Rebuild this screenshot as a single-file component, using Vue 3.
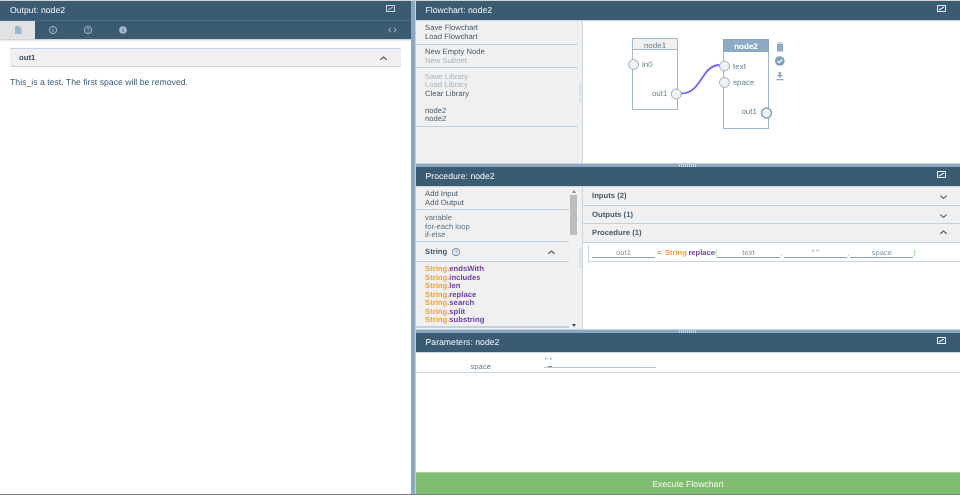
<script setup>
const fnNames = ['endsWith', 'includes', 'len', 'replace', 'search', 'split', 'substring']
</script>

<template>
  <div class="app">
    <section class="left">
      <header class="head">
        <span>Output: node2</span>
        <svg class="max dimmed" viewBox="0 0 9 7"><rect x=".5" y=".5" width="8" height="6" fill="none" stroke="#c9d6e1"/><path d="M2 5l5-3" stroke="#c9d6e1"/></svg>
      </header>
      <nav class="tabs">
        <div class="tab active">
          <svg viewBox="0 0 10 10" width="10" height="10"><path d="M2 1h4l2.500 2.500V9H2z" fill="#9db6cc"/></svg>
        </div>
        <div class="tab"><svg viewBox="0 0 10 10" width="10" height="10"><circle cx="5" cy="5" r="3.600" fill="none" stroke="#a8bccd"/><path d="M5 3.200v.7M5 4.600V7" stroke="#a8bccd"/></svg></div>
        <div class="tab"><svg viewBox="0 0 10 10" width="10" height="10"><circle cx="5" cy="5" r="3.600" fill="none" stroke="#a8bccd"/><path d="M3.900 4.200C4 3 6 3 6 4.300 6 5 5 5 5 5.800M5 6.400v.8" fill="none" stroke="#a8bccd" stroke-width=".8"/></svg></div>
        <div class="tab"><svg viewBox="0 0 10 10" width="10" height="10"><circle cx="5" cy="5" r="3.800" fill="#a8bccd"/><path d="M5 3v.8M5 4.600V7" stroke="#3b5b73"/></svg></div>
        <svg class="code" viewBox="0 0 9 6" width="9" height="6"><path d="M3 .8L.8 3 3 5.200M6 .8L8.200 3 6 5.200" fill="none" stroke="#b8c8d6"/></svg>
      </nav>
      <div class="out-body">
        <div class="acc-out">
          <span>out1</span>
          <svg class="chev" viewBox="0 0 10 6"><path d="M1.500 5L5 1.800 8.500 5" fill="none" stroke="#44586a" stroke-width="1.300"/></svg>
        </div>
        <p class="out-text">This_is a test. The first space will be removed.</p>
      </div>
    </section>

    <div class="vsplit"></div>

    <section class="right">
      <div class="pane flow">
        <header class="head rhead">
          <span>Flowchart: node2</span>
          <svg class="max" viewBox="0 0 9 7"><rect width="9" height="7" fill="#e8eef4"/><rect x="1" y="1" width="7" height="5" fill="#3b5b73"/><path d="M2 5l5-3" stroke="#e8eef4" stroke-width="1.100"/></svg>
        </header>
        <div class="pane-body">
          <aside class="side">
            <div class="grp g1"><div>Save Flowchart</div><div>Load Flowchart</div></div>
            <div class="grp g2"><div>New Empty Node</div><div class="dim">New Subnet</div></div>
            <div class="grp g3">
              <div class="dim">Save Library</div><div class="dim">Load Library</div><div>Clear Library</div>
              <div class="sp"></div><div>node2</div><div>node2</div>
            </div>
          </aside>
          <div class="hgrip"><i class="grip-v"></i></div>
          <div class="canvas">
            <svg class="graph" width="377" height="142" viewBox="583 21 377 142">
              <rect x="632.500" y="38.500" width="45" height="71" fill="#fff" stroke="#a5b9cb"/>
              <rect x="632.500" y="38.500" width="45" height="11" fill="#f0f0f0" stroke="#a5b9cb"/>
              <text x="655" y="47.500" class="t c">node1</text>
              <text x="642" y="67" class="t">in0</text>
              <text x="667.500" y="96" class="t e">out1</text>
              <circle cx="633.500" cy="64.500" r="5" class="port"/>
              <path d="M681 93.500C702 93.500 701 65 720 65" fill="none" stroke="#7464f5" stroke-width="1.800"/>
              <circle cx="676.300" cy="94" r="5" class="port"/>

              <rect x="723.500" y="39.500" width="45" height="89" fill="#fff" stroke="#a0b6c9"/>
              <rect x="723.500" y="39.500" width="45" height="12" fill="#8dabc5" stroke="#8aa5bc"/>
              <text x="746" y="48.500" class="t c w">node2</text>
              <text x="733" y="68.500" class="t">text</text>
              <text x="733" y="85" class="t">space</text>
              <text x="757" y="114" class="t e">out1</text>
              <circle cx="724.500" cy="66" r="5" class="port"/>
              <circle cx="724.500" cy="82.500" r="5" class="port"/>
              <circle cx="766.500" cy="113" r="5" fill="#f0f0f0" stroke="#7f9fbb" stroke-width="1.400"/>

              <path d="M777 44h6v7.500h-6zM777.500 42.500h5v1h-5z" fill="#8dabc5"/>
              <circle cx="779.800" cy="61" r="4.800" fill="#7f9fbb"/>
              <path d="M777.500 61l1.700 1.700 3-3.200" fill="none" stroke="#fff" stroke-width="1.100"/>
              <path d="M778.700 72h2.400v3h1.900l-3.100 3-3.100-3h1.900zM776.300 79h7v1.200h-7z" fill="#8dabc5"/>
            </svg>
          </div>
        </div>
      </div>

      <div class="hsplit"><i class="grip-h"></i></div>

      <div class="pane proc">
        <header class="head rhead">
          <span>Procedure: node2</span>
          <svg class="max" viewBox="0 0 9 7"><rect width="9" height="7" fill="#e8eef4"/><rect x="1" y="1" width="7" height="5" fill="#3b5b73"/><path d="M2 5l5-3" stroke="#e8eef4" stroke-width="1.100"/></svg>
        </header>
        <div class="pane-body">
          <aside class="side proc-side">
            <div class="list">
              <div class="grp p1"><div>Add Input</div><div>Add Output</div></div>
              <div class="grp p2"><div>variable</div><div>for-each loop</div><div>if-else</div></div>
              <div class="str-head">
                <b>String</b>
                <svg class="help" viewBox="0 0 10 10"><circle cx="5" cy="5" r="3.700" fill="none" stroke="#5d7488" stroke-width=".8"/><path d="M3.900 4.200C4 3 6 3 6 4.300 6 5 5 5 5 5.800M5 6.400v.8" fill="none" stroke="#5d7488" stroke-width=".7"/></svg>
                <svg class="chev sc" viewBox="0 0 10 6"><path d="M1.500 5L5 1.800 8.500 5" fill="none" stroke="#44586a" stroke-width="1.300"/></svg>
              </div>
              <div class="fns">
                <div v-for="n in fnNames" :key="n"><span class="or">String.</span><span class="pu">{{ n }}</span></div>
              </div>
            </div>
            <div class="scroll">
              <i class="up"></i>
              <i class="thumb"></i>
              <i class="down"></i>
            </div>
          </aside>
          <div class="hgrip"><i class="grip-v"></i></div>
          <div class="proc-main">
            <div class="acc">
              <span>Inputs (2)</span>
              <svg class="chev dn" viewBox="0 0 10 6"><path d="M1.500 1.500L5 4.500 8.500 1.500" fill="none" stroke="#44586a" stroke-width="1.300"/></svg>
            </div>
            <div class="acc">
              <span>Outputs (1)</span>
              <svg class="chev dn" viewBox="0 0 10 6"><path d="M1.500 1.500L5 4.500 8.500 1.500" fill="none" stroke="#44586a" stroke-width="1.300"/></svg>
            </div>
            <div class="acc">
              <span>Procedure (1)</span>
              <svg class="chev upc" viewBox="0 0 10 6"><path d="M1.500 5L5 1.800 8.500 5" fill="none" stroke="#44586a" stroke-width="1.300"/></svg>
            </div>
            <div class="line">
              <span class="inp">out1</span>
              <span class="eq">=</span>
              <span class="or b">String</span>
              <span class="pu b rp">replace</span>
              <span class="par">(</span>
              <span class="inp">text</span>
              <span class="com">,</span>
              <span class="inp q">" "</span>
              <span class="com">,</span>
              <span class="inp">space</span>
              <span class="par">)</span>
            </div>
          </div>
        </div>
      </div>

      <div class="hsplit"><i class="grip-h"></i></div>

      <div class="pane params">
        <header class="head rhead">
          <span>Parameters: node2</span>
          <svg class="max" viewBox="0 0 9 7"><rect width="9" height="7" fill="#e8eef4"/><rect x="1" y="1" width="7" height="5" fill="#3b5b73"/><path d="M2 5l5-3" stroke="#e8eef4" stroke-width="1.100"/></svg>
        </header>
        <div class="param-body">
          <div class="param-row">
            <span class="plabel">space</span>
            <span class="pinput">" "</span>
          </div>
        </div>
      </div>

      <button class="exec">Execute Flowchart</button>
    </section>
  </div>
</template>

<style>
html, body { margin: 0; padding: 0; background: #fff; overflow: hidden; }
</style>

<style scoped>
.app {
  display: flex;
  width: 960px;
  height: 495px;
  box-sizing: border-box;
  border-top: 1px solid #d4d4d4;
  border-bottom: 1px solid #808080;
  font-family: "Liberation Sans", Arial, sans-serif;
  font-size: 7.700px;
  text-rendering: geometricPrecision;
  color: #395b73;
  overflow: hidden;
  background: #fff;
  filter: blur(.3px);
}
.left { width: 411px; display: flex; flex-direction: column; flex: none; }
.head {
  height: 19px;
  flex: none;
  background: #3b5b73;
  color: #f2f5f7;
  font-size: 8.700px;
  display: flex;
  align-items: center;
  justify-content: space-between;
  padding: 0 14px 1px 10px;
  box-sizing: border-box;
}
.rhead { padding-left: 9.500px; height: 20px; border-bottom: 1px solid #c8d6e2; }
.max { width: 9px; height: 7px; margin-top: -3px; }
.dimmed { margin-right: 2px; }
.tabs {
  height: 19px;
  flex: none;
  background: #3b5b73;
  display: flex;
  align-items: center;
  border-top: 1px solid #50708a;
  box-shadow: 0 1px 2px rgba(0,0,0,.25);
  box-sizing: border-box;
}
.tab { width: 35px; height: 100%; display: flex; align-items: center; justify-content: center; }
.tab.active { background: #e2e2e2; }
.code { margin-left: auto; margin-right: 14px; }
.out-body { padding: 9px 10px 0; }
.acc-out {
  height: 19px;
  box-sizing: border-box;
  background: #f0f0f0;
  border-top: 1px solid #c5d5e4;
  border-bottom: 1px solid #c5d5e4;
  display: flex;
  align-items: center;
  justify-content: space-between;
  padding: 0 13px 0 9px;
  font-weight: bold;
  color: #3f4c57;
}
.chev { width: 9px; height: 6px; flex: none; }
.out-text { margin: 10px 0 0; font-size: 8.700px; line-height: 10px; }

.vsplit { width: 4px; flex: none; background: #8aa8c3; border-right: 1px solid #c5d3df; }
.right { flex: 1; min-width: 0; display: flex; flex-direction: column; }
.pane { display: flex; flex-direction: column; flex: none; }
.flow { height: 162px; }
.proc { height: 162px; }
.params { flex: 1; min-height: 0; }
.pane-body { flex: 1; min-height: 0; display: flex; }
.hsplit {
  height: 4px;
  flex: none;
  background: #8aa8c3;
  border-top: 1px solid #c5d3df;
  box-sizing: border-box;
  display: flex;
  align-items: center;
  justify-content: center;
}
.grip-h { display: block; width: 18px; height: 3px; background: repeating-linear-gradient(90deg, #c7d5e0 0 1px, transparent 1px 2px); }
.grip-v { display: block; width: 3px; height: 19px; background: repeating-linear-gradient(0deg, #d3dae0 0 1px, transparent 1px 2px); }

.side { width: 162px; flex: none; background: #f0f0f0; box-sizing: border-box; color: #47596a; line-height: 8.500px; }
.grp { border-bottom: 1px solid #c0d2e2; padding-left: 9px; box-sizing: border-box; }
.g1 { height: 24px; padding-top: 3.250px; }
.g2 { height: 23px; padding-top: 3.250px; }
.g3 { height: 58.500px; padding-top: 4.500px; }
.sp { height: 8.500px; }
.dim { color: #a4b6c6; }
.hgrip { width: 4px; flex: none; background: #f0f0f0; border-right: 1px solid #c8d7e4; display: flex; align-items: center; justify-content: center; }
.canvas { flex: 1; min-width: 0; background: #fff; }
.graph { display: block; }
.t { font-size: 8px; fill: #65808f; font-family: "Liberation Sans", Arial, sans-serif; }
.c { text-anchor: middle; }
.e { text-anchor: end; }
.w { fill: #fff; font-weight: bold; }
.port { fill: #f0f0f0; stroke: #9aaebf; stroke-width: 1; }

.proc-side { display: flex; overflow: hidden; }
.list { flex: 1; min-width: 0; }
.p1 { height: 23px; padding-top: 3.250px; }
.p2 { height: 32px; padding-top: 4.250px; color: #5b7184; }
.str-head {
  height: 20px;
  box-sizing: border-box;
  border-bottom: 1px solid #c0d2e2;
  display: flex;
  align-items: center;
  padding: 1px 0 0 9px;
  gap: 4px;
  color: #4a6072;
}
.help { width: 10px; height: 10px; }
.sc { margin-left: auto; margin-right: 13px; }
.fns { padding: 3px 0 2px 9px; height: 66px; box-sizing: border-box; border-bottom: 2px solid #c0d2e2; font-weight: bold; }
.or { color: #f2a33a; }
.pu { color: #7042a8; }
.scroll { width: 9px; flex: none; display: flex; flex-direction: column; align-items: center; background: #f1f1f1; }
.up, .down { width: 0; height: 0; border-left: 2px solid transparent; border-right: 2px solid transparent; }
.up { border-bottom: 3px solid #888; margin-top: 3px; }
.down { border-top: 3px solid #444; margin-top: auto; margin-bottom: 2px; }
.thumb { width: 7px; height: 40px; background: #bdbdbd; margin-top: 2px; }

.proc-main { flex: 1; min-width: 0; background: #fff; }
.acc {
  height: 18.500px;
  box-sizing: border-box;
  background: #f0f0f0;
  border-bottom: 1px solid #c0d2e2;
  display: flex;
  align-items: center;
  justify-content: space-between;
  padding: 0 12px 0 9px;
  font-weight: bold;
  color: #47596a;
}
.dn { margin-top: 3px; }
.upc { margin-top: -2px; }
.line {
  margin: 2px 0 0 5px;
  height: 17px;
  box-sizing: border-box;
  border-left: 1px solid #c5d5e4;
  border-bottom: 1px solid #c5d5e4;
  display: flex;
  align-items: center;
  padding-left: 3px;
  font-size: 7.600px;
}
.inp { width: 63px; text-align: center; border-bottom: 1px solid #8aa3b8; color: #7e93a5; line-height: 9px; height: 10px; box-sizing: border-box; flex: none; }
.q { line-height: 10px; }
.eq { color: #7fbf6f; margin: 0 3.500px 0 2px; font-weight: bold; }
.b { font-weight: bold; }
.rp { margin-left: 1.500px; }
.par { color: #7fbf6f; width: 2px; }
.com { color: #7fbf6f; width: 3.700px; text-align: center; }
.param-body { flex: 1; background: #fff; }
.param-row { height: 20px; border-bottom: 1px solid #c8d7e4; box-sizing: border-box; display: flex; }
.plabel { width: 75px; text-align: right; padding-top: 9px; color: #5d7a92; box-sizing: border-box; line-height: 9px; }
.pinput { margin-left: 53px; width: 112px; height: 15px; padding-top: 5px; padding-left: 1px; border-bottom: 1px solid #b8cbdb; line-height: 6px; color: #7e93a5; box-sizing: border-box; background: linear-gradient(#6d8598, #6d8598) 4px 100% / 4px 1px no-repeat; }
.exec {
  flex: none;
  height: 22px;
  border: 0;
  border-top: 1px solid #a8d098;
  background: #81bd70;
  color: #f4f9f2;
  font-family: inherit;
  font-size: 8.700px;
  text-rendering: geometricPrecision;
  padding: 0;
}
</style>
